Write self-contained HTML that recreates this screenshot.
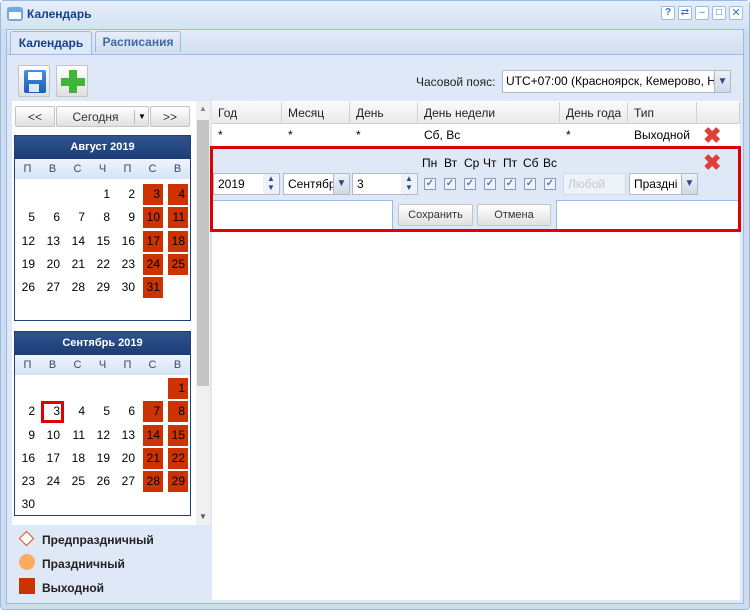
<!DOCTYPE html>
<html><head><meta charset="utf-8"><style>
*{box-sizing:border-box;margin:0;padding:0}
body{width:750px;height:610px;overflow:hidden;font-family:"Liberation Sans",sans-serif;font-size:12px;color:#000;background:#fff;position:relative}
.a{position:absolute}
.win{left:0;top:0;width:750px;height:610px;background:#cfdcee;border:1px solid #99bbe8;border-radius:4px}
.tb{left:1px;top:1px;width:748px;height:28px;background:linear-gradient(#e6eef9,#d5e2f2)}
.btn{background:linear-gradient(#fff,#e0e0e0);border:1px solid #c4c4c4;border-radius:2px;text-align:center;line-height:20px;color:#333}
.cal{left:14px;width:177px;border:1px solid #1e3f7a;background:#fff}
.cal .h{height:23px;background:linear-gradient(#2f5490,#1c3c75);color:#fff;font-weight:bold;text-align:center;line-height:23px;font-size:11px}
.cal .n{height:20px;background:linear-gradient(#eef4fc,#d6e4f6);display:flex;color:#3a4a66;font-size:11px}
.cal .n span{width:25px;text-align:center;line-height:20px}
.cal .r{display:flex;height:23.3px}
.cal .r span{width:25px;position:relative;text-align:right;padding-right:5px;line-height:23px}
.cal .r span.w:before{content:"";position:absolute;right:2px;top:1px;width:20px;height:21px;background:#cc3300;z-index:0}
.cal .r span b{position:relative;font-weight:normal;z-index:1}
.gh{top:102px;height:22px;background:linear-gradient(#fafafa,#eaeaea);border-bottom:1px solid #d0d0d0;border-right:1px solid #d0d0d0;padding-left:6px;line-height:22px;color:#222}
.x{font-size:22px;color:#e0403a;font-weight:bold;line-height:20px}
.in{background:#fff;border:1px solid #b5b8c8;height:22px;line-height:20px;padding-left:4px}
.cb{width:12px;height:12px;border:1px solid #8a9bb5;background:#eef2fa;color:#2a4a8a;font-size:10px;line-height:10px;text-align:center}
.dd{background:linear-gradient(#eef2f8,#cfd8e6);border-left:1px solid #b5b8c8;color:#2a4a8a;text-align:center;font-size:10px}
</style></head><body>
<div class="a win"></div>
<div class="a tb"></div>
<div class="a" style="left:7px;top:7px;width:16px;height:14px;background:#6fa8e6;border-radius:3px"><div class="a" style="left:2px;top:5px;width:12px;height:7px;background:#fff"></div></div>
<div class="a" style="left:27px;top:7px;font-weight:bold;color:#15428b;font-size:12px">Календарь</div>
<div class="a" style="left:661px;top:6px;display:flex;gap:3px">
<div style="width:14px;height:14px;border:1px solid #99bbe8;border-radius:2px;background:#fff;color:#3a6fbf;font-size:10px;font-weight:bold;text-align:center;line-height:12px">?</div>
<div style="width:14px;height:14px;border:1px solid #99bbe8;border-radius:2px;background:#fff;color:#3a6fbf;font-size:10px;text-align:center;line-height:12px">⇄</div>
<div style="width:14px;height:14px;border:1px solid #99bbe8;border-radius:2px;background:#fff;color:#3a6fbf;font-size:10px;text-align:center;line-height:12px">–</div>
<div style="width:14px;height:14px;border:1px solid #99bbe8;border-radius:2px;background:#fff;color:#3a6fbf;font-size:10px;text-align:center;line-height:12px">□</div>
<div style="width:14px;height:14px;border:1px solid #99bbe8;border-radius:2px;background:#fff;color:#3a6fbf;font-size:11px;text-align:center;line-height:12px">✕</div>
</div>
<div class="a" style="left:6px;top:29px;width:738px;height:25px;background:linear-gradient(#e3ebf7,#d2dff0);border:1px solid #99bbe8;border-bottom:none"></div>
<div class="a" style="left:10px;top:31px;width:82px;height:24px;background:#dfe8f6;border:1px solid #99bbe8;border-bottom:none;border-radius:3px 3px 0 0;font-weight:bold;color:#15428b;text-align:center;line-height:22px">Календарь</div>
<div class="a" style="left:95px;top:31px;width:86px;height:21px;background:linear-gradient(#e8eef8,#d0ddef);border:1px solid #99bbe8;border-bottom:none;border-radius:3px 3px 0 0;font-weight:bold;color:#416aa3;text-align:center;line-height:20px">Расписания</div>
<div class="a" style="left:6px;top:54px;width:738px;height:550px;background:#dfe8f6;border:1px solid #99bbe8"></div>
<div class="a btn" style="left:18px;top:65px;width:32px;height:32px"><div class="a" style="left:5px;top:4px;width:22px;height:23px;background:linear-gradient(#4a90e0,#1d5cb5);border-radius:2px"><div class="a" style="left:4px;top:2px;width:14px;height:8px;background:#fff"></div><div class="a" style="left:5px;top:14px;width:10px;height:8px;background:#dfe8f6"></div></div></div>
<div class="a btn" style="left:56px;top:65px;width:32px;height:32px"><div class="a" style="left:12px;top:4px;width:8px;height:23px;background:#3fb53a"></div><div class="a" style="left:4px;top:12px;width:24px;height:8px;background:#3fb53a"></div></div>
<div class="a" style="left:416px;top:75px;color:#222">Часовой пояс:</div>
<div class="a in" style="left:502px;top:70px;width:229px;height:23px;line-height:21px;overflow:hidden;white-space:nowrap;padding-left:3px">UTC+07:00 (Красноярск, Кемерово, Н</div>
<div class="a dd" style="left:714px;top:71px;width:16px;height:21px;line-height:21px">▼</div>
<div class="a" style="left:12px;top:101px;width:184px;height:424px;background:#fff"></div>
<div class="a" style="left:196px;top:101px;width:14px;height:424px;background:#f0f0f0"></div>
<div class="a" style="left:197px;top:120px;width:12px;height:266px;background:#c4c4c4"></div>
<div class="a" style="left:199px;top:104px;font-size:8px;color:#888">▲</div>
<div class="a" style="left:199px;top:512px;font-size:8px;color:#555">▼</div>
<div class="a btn" style="left:15px;top:106px;width:40px;height:21px">&lt;&lt;</div>
<div class="a btn" style="left:56px;top:106px;width:93px;height:21px;padding-right:14px">Сегодня</div>
<div class="a" style="left:134px;top:110px;width:1px;height:14px;background:#bbb"></div>
<div class="a" style="left:138px;top:107px;font-size:8px;line-height:20px">▼</div>
<div class="a btn" style="left:150px;top:106px;width:40px;height:21px">&gt;&gt;</div>

<div class="a cal" style="top:135px;height:186px">
<div class="h">Август 2019</div>
<div class="n"><span>П</span><span>В</span><span>С</span><span>Ч</span><span>П</span><span>С</span><span>В</span></div>
<div style="height:4px"></div>
<div class="r"><span></span><span></span><span></span><span><b>1</b></span><span><b>2</b></span><span class="w"><b>3</b></span><span class="w"><b>4</b></span></div>
<div class="r"><span><b>5</b></span><span><b>6</b></span><span><b>7</b></span><span><b>8</b></span><span><b>9</b></span><span class="w"><b>10</b></span><span class="w"><b>11</b></span></div>
<div class="r"><span><b>12</b></span><span><b>13</b></span><span><b>14</b></span><span><b>15</b></span><span><b>16</b></span><span class="w"><b>17</b></span><span class="w"><b>18</b></span></div>
<div class="r"><span><b>19</b></span><span><b>20</b></span><span><b>21</b></span><span><b>22</b></span><span><b>23</b></span><span class="w"><b>24</b></span><span class="w"><b>25</b></span></div>
<div class="r"><span><b>26</b></span><span><b>27</b></span><span><b>28</b></span><span><b>29</b></span><span><b>30</b></span><span class="w"><b>31</b></span><span></span></div>
</div>

<div class="a cal" style="top:331px;height:185px">
<div class="h">Сентябрь 2019</div>
<div class="n"><span>П</span><span>В</span><span>С</span><span>Ч</span><span>П</span><span>С</span><span>В</span></div>
<div style="height:2px"></div>
<div class="r"><span></span><span></span><span></span><span></span><span></span><span></span><span class="w"><b>1</b></span></div>
<div class="r"><span><b>2</b></span><span style="outline:3px solid #e00000;outline-offset:-4px"><b>3</b></span><span><b>4</b></span><span><b>5</b></span><span><b>6</b></span><span class="w"><b>7</b></span><span class="w"><b>8</b></span></div>
<div class="r"><span><b>9</b></span><span><b>10</b></span><span><b>11</b></span><span><b>12</b></span><span><b>13</b></span><span class="w"><b>14</b></span><span class="w"><b>15</b></span></div>
<div class="r"><span><b>16</b></span><span><b>17</b></span><span><b>18</b></span><span><b>19</b></span><span><b>20</b></span><span class="w"><b>21</b></span><span class="w"><b>22</b></span></div>
<div class="r"><span><b>23</b></span><span><b>24</b></span><span><b>25</b></span><span><b>26</b></span><span><b>27</b></span><span class="w"><b>28</b></span><span class="w"><b>29</b></span></div>
<div class="r"><span><b>30</b></span></div>
</div>
<div class="a" style="left:21px;top:533px;width:11px;height:11px;border:1.5px solid #d84a1b;background:#fff;transform:rotate(45deg)"></div>
<div class="a" style="left:42px;top:533px;font-weight:bold;font-size:12px;color:#222">Предпраздничный</div>
<div class="a" style="left:19px;top:554px;width:16px;height:16px;border-radius:50%;background:#fdab63"></div>
<div class="a" style="left:42px;top:557px;font-weight:bold;font-size:12px;color:#222">Праздничный</div>
<div class="a" style="left:19px;top:578px;width:16px;height:16px;background:#cc3300"></div>
<div class="a" style="left:42px;top:581px;font-weight:bold;font-size:12px;color:#222">Выходной</div>
<div class="a" style="left:212px;top:101px;width:528px;height:499px;background:#fff"></div>
<div class="a gh" style="left:212px;width:70px">Год</div>
<div class="a gh" style="left:282px;width:68px">Месяц</div>
<div class="a gh" style="left:350px;width:68px">День</div>
<div class="a gh" style="left:418px;width:142px">День недели</div>
<div class="a gh" style="left:560px;width:68px">День года</div>
<div class="a gh" style="left:628px;width:69px">Тип</div>
<div class="a gh" style="left:697px;width:43px"></div>
<div class="a" style="left:218px;top:128px">*</div>
<div class="a" style="left:288px;top:128px">*</div>
<div class="a" style="left:356px;top:128px">*</div>
<div class="a" style="left:424px;top:128px">Сб, Вс</div>
<div class="a" style="left:566px;top:128px">*</div>
<div class="a" style="left:634px;top:128px">Выходной</div>
<div class="a x" style="left:703px;top:126px">✖</div>
<div class="a" style="left:210px;top:146px;width:531px;height:86px;border:3px solid #e00000;background:#dfe8f6"></div>
<div class="a" style="left:213px;top:200px;width:180px;height:29px;background:#fff;border-top:1px solid #99bbe8;border-right:1px solid #99bbe8"></div>
<div class="a" style="left:556px;top:200px;width:182px;height:29px;background:#fff;border-top:1px solid #99bbe8;border-left:1px solid #99bbe8"></div>
<div class="a" style="left:422px;top:156px">Пн</div>
<div class="a" style="left:444px;top:156px">Вт</div>
<div class="a" style="left:464px;top:156px">Ср</div>
<div class="a" style="left:483px;top:156px">Чт</div>
<div class="a" style="left:503px;top:156px">Пт</div>
<div class="a" style="left:523px;top:156px">Сб</div>
<div class="a" style="left:543px;top:156px">Вс</div>
<div class="a x" style="left:703px;top:153px">✖</div>
<div class="a in" style="left:213px;top:173px;width:67px">2019</div>
<div class="a" style="left:263px;top:174px;width:16px;height:20px;font-size:8px;color:#2a4a8a;line-height:9px;text-align:center;background:#eef2f8">▲<br>▼</div>
<div class="a in" style="left:283px;top:173px;width:67px;overflow:hidden;white-space:nowrap">Сентябр</div>
<div class="a dd" style="left:333px;top:174px;width:16px;height:20px;line-height:20px">▼</div>
<div class="a in" style="left:352px;top:173px;width:66px">3</div>
<div class="a" style="left:401px;top:174px;width:16px;height:20px;font-size:8px;color:#2a4a8a;line-height:9px;text-align:center;background:#eef2f8">▲<br>▼</div>
<div class="a" style="left:424px;top:178px;display:flex;gap:8px">
<div class="cb">✓</div><div class="cb">✓</div><div class="cb">✓</div><div class="cb">✓</div><div class="cb">✓</div><div class="cb">✓</div><div class="cb">✓</div></div>
<div class="a in" style="left:563px;top:173px;width:63px;color:#c0c8d4;border-color:#d0d8e4;background:#eef3fa">Любой</div>
<div class="a in" style="left:629px;top:173px;width:69px;overflow:hidden;white-space:nowrap">Праздні</div>
<div class="a dd" style="left:681px;top:174px;width:16px;height:20px;line-height:20px">▼</div>
<div class="a btn" style="left:398px;top:204px;width:75px;height:22px;font-size:11px">Сохранить</div>
<div class="a btn" style="left:477px;top:204px;width:74px;height:22px;font-size:11px">Отмена</div>
</body></html>
